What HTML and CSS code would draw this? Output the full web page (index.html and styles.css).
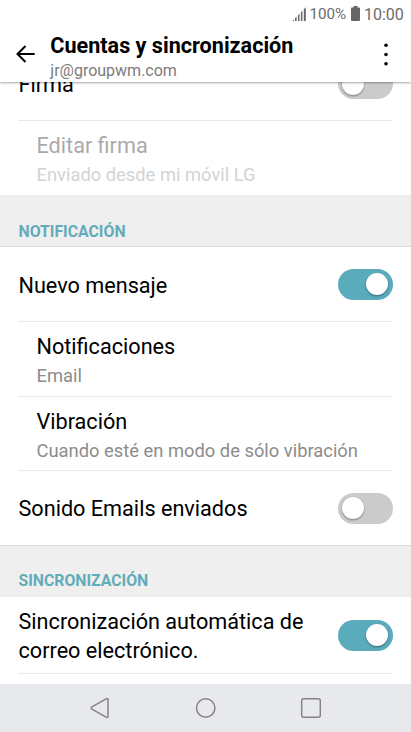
FILE: index.html
```html
<!DOCTYPE html>
<html lang="es">
<head>
<meta charset="utf-8">
<title>Cuentas y sincronización</title>
<link rel="stylesheet" href="styles.css">
</head>
<body>
<div class="screen">
  <header class="header">
    <div class="status">
      <svg class="signal" width="15" height="14" viewBox="0 0 15 14"><path d="M.3 14L1.800 12.300V14zM3 14V11.200L4.600 9.600V14zM6 14V8.200L7.500 6.700V14zM8.900 14V5.300L10.400 3.800V14zM11.800 14V2.300L13.800.3V14z" fill="#666"/></svg>
      <span class="percent">100%</span>
      <svg class="battery" width="9" height="15" viewBox="0 0 9 15"><path d="M2.500 0h4v1.500H8a1 1 0 0 1 1 1V14a1 1 0 0 1-1 1H1a1 1 0 0 1-1-1V2.500a1 1 0 0 1 1-1h1.500z" fill="#666"/></svg>
      <span class="clock">10:00</span>
    </div>
    <div class="bar">
      <svg class="back" width="20" height="20" viewBox="0 0 20 20"><path d="M9.500 2L1.500 10l8 8M1.700 10h17" fill="none" stroke="#000" stroke-width="2"/></svg>
      <div class="heading">
        <div class="title">Cuentas y sincronización</div>
        <div class="account">jr@groupwm.com</div>
      </div>
      <svg class="more" width="4" height="23" viewBox="0 0 4 23"><circle cx="2" cy="2.300" r="1.800"/><circle cx="2" cy="11.500" r="1.800"/><circle cx="2" cy="20.700" r="1.800"/></svg>
    </div>
  </header>
  <main class="list">
    <div class="row first"><div class="label">Firma</div><div class="switch"></div></div>
    <div class="row sub disabled"><div class="label">Editar firma</div><div class="detail">Enviado desde mi móvil LG</div></div>
    <div class="section"><span>NOTIFICACIÓN</span></div>
    <div class="row nuevo"><div class="label">Nuevo mensaje</div><div class="switch on"></div></div>
    <div class="row sub"><div class="label">Notificaciones</div><div class="detail">Email</div></div>
    <div class="row sub vib"><div class="label">Vibración</div><div class="detail">Cuando esté en modo de sólo vibración</div></div>
    <div class="row last"><div class="label">Sonido Emails enviados</div><div class="switch"></div></div>
    <div class="section second"><span>SINCRONIZACIÓN</span></div>
    <div class="row tall"><div class="label">Sincronización automática de<br>correo electrónico.</div><div class="switch on"></div></div>
  </main>
  <nav class="nav">
    <svg width="22" height="22" viewBox="0 0 22 22"><path d="M19 2.500V19.500Q19 21 17.500 20.300L3 12.200Q1.400 11 3 9.800L17.500 1.700Q19 1 19 2.500z"/></svg>
    <svg width="22" height="22" viewBox="0 0 22 22"><circle cx="10.700" cy="11" r="9.200"/></svg>
    <svg width="22" height="22" viewBox="0 0 22 22"><rect x="1.700" y="1.700" width="18.600" height="18.600" rx="2"/></svg>
  </nav>
</div>
</body>
</html>
```
FILE: styles.css
```css
* { box-sizing: border-box; }
body { margin: 0; background: #fff; font-family: Roboto, "Liberation Sans", sans-serif; }
svg { display: block; flex: none; }
.screen { width: 411px; height: 732px; display: flex; flex-direction: column; overflow: hidden; white-space: nowrap; }

.header { height: 82px; flex: none; background: #fff; position: relative; z-index: 1; box-shadow: 0 1px 2px rgba(0,0,0,.35); }
.status { height: 29px; display: flex; align-items: center; padding: 0 7px 0 292px; color: #6c6c6c; font-size: 16px; line-height: 29px; }
.signal { margin-top: -1px; }
.percent { width: 37px; margin-left: 2.500px; font-size: 15.200px; }
.battery { margin-left: 4.500px; margin-top: -2px; }
.clock { margin-left: 4px; }
.bar { display: flex; height: 53px; padding-left: 15.500px; }
.back { margin-top: 15px; }
.heading { flex: 1; margin-left: 14.800px; padding-top: 3px; }
.title { font-size: 21.600px; line-height: 28px; font-weight: 700; color: #000; }
.account { font-size: 16px; line-height: 22px; color: #7c7c7c; }
.more { margin: 14px 23px 0 0; }

.list { flex: 1; min-height: 0; overflow: hidden; background: #fff; }
.row { height: 75px; margin: 0 18px; border-bottom: 1px solid #e9e9e9; display: flex; align-items: center; justify-content: space-between; }
.row.first { height: 39px; align-items: flex-start; }
.first .label { margin-top: -11px; }
.first .switch { margin-top: -14px; }
.row.sub { display: block; padding: 11px 0 0 18.500px; }
.row.disabled { height: 74px; border: 0; }
.row.vib { height: 74px; }
.row.last { height: 74px; border: 0; }
.row.tall { height: 77px; }
.label { font-size: 21.650px; line-height: 28.500px; color: #000; padding-left: .5px; }
.sub .label { padding-left: 0; }
.nuevo .label { padding-top: 4px; }
.last .label { padding-top: 3px; }
.tall .label { padding-top: 3px; }
.detail { font-size: 18.350px; line-height: 28px; color: #8c8c8c; }
.disabled .label { color: #aaa; }
.disabled .detail { color: #d3d3d3; }

.section { height: 52px; background: #efefef; border-bottom: 1px solid #dedede; padding: 26px 18.500px 0; font-size: 15.800px; line-height: 22px; font-weight: 700; color: #62acb9; }
.section.second { border-top: 1px solid #dedede; border-bottom: 0; padding-top: 24px; }

.switch { width: 55px; height: 31px; border-radius: 16px; background: #cbcbcb; padding: 4.500px 5px 4.500px 4.300px; flex: none; }
.switch::before { content: ""; display: block; width: 22px; height: 22px; border-radius: 50%; background: #fff; box-shadow: 0 1px 2px rgba(0,0,0,.4); }
.switch.on { background: #5aabbc; }
.switch.on::before { margin-left: auto; }

.nav { height: 48px; flex: none; background: #e8e9ed; display: flex; align-items: center; justify-content: center; gap: 83.500px; }
.nav svg { fill: none; stroke: #858585; stroke-width: 1.500; }
```
